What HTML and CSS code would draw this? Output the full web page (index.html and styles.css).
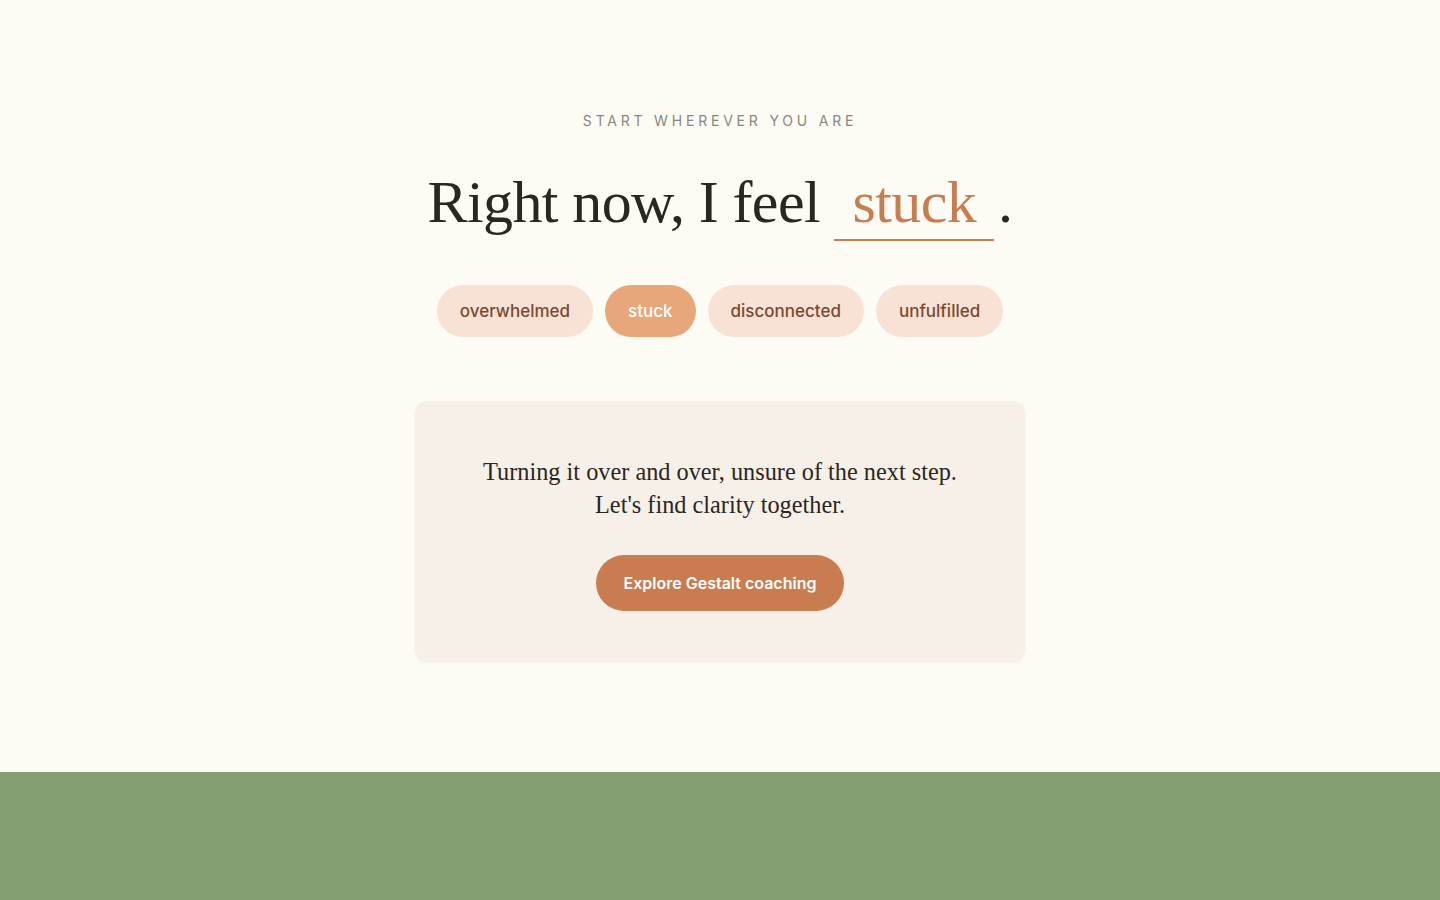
FILE: index.html
```html
<!DOCTYPE html>
<html lang="en">
<head>
<meta charset="utf-8">
<title>Start wherever you are</title>
<link rel="stylesheet" href="styles.css">
</head>
<body>
<main class="hero">
  <p class="eyebrow">Start wherever you are</p>
  <h1 class="headline">Right now, I feel <span class="feeling">stuck</span>.</h1>
  <div class="pills">
    <button class="pill">overwhelmed</button>
    <button class="pill pill-active">stuck</button>
    <button class="pill">disconnected</button>
    <button class="pill">unfulfilled</button>
  </div>
  <section class="card">
    <p class="card-text">Turning it over and over, unsure of the next step.<br>Let's find clarity together.</p>
    <a class="cta" href="#">Explore Gestalt coaching</a>
  </section>
</main>
<footer class="footer"></footer>
</body>
</html>
```

FILE: styles.css
```css
* { box-sizing: border-box; }
html, body { margin: 0; padding: 0; }
body {
  background: #fdfcf4;
  font-family: "Liberation Serif", "Times New Roman", serif;
  color: #2a2622;
}
.hero {
  display: flex;
  flex-direction: column;
  align-items: center;
  padding: 111px 0 110px;
}
.eyebrow {
  margin: 0;
  font-family: Inter, "Liberation Sans", sans-serif;
  font-size: 14px;
  line-height: 20px;
  letter-spacing: 3.8px;
  text-transform: uppercase;
  color: #8b857e;
  font-weight: 400;
}
.headline {
  margin: 35px 0 0;
  font-family: "Liberation Serif", "Times New Roman", serif;
  font-weight: 400;
  font-size: 60px;
  line-height: 72px;
  letter-spacing: -0.6px;
  color: #2a2622;
  text-align: center;
}
.feeling {
  display: inline-block;
  line-height: 1;
  margin-right: 4px;
  padding: 0 18px 7px;
  border-bottom: 2px solid #c87d50;
  color: #c87d50;
}
.pills {
  display: flex;
  gap: 12px;
  margin-top: 44px;
}
.pill {
  border: none;
  border-radius: 999px;
  background: #f8e1d5;
  color: #7b4a2e;
  font-family: Inter, "Liberation Sans", sans-serif;
  font-size: 17px;
  font-weight: 500;
  height: 52px;
  padding: 0 23px;
  cursor: pointer;
}
.pill-active {
  background: #e7a77b;
  color: #ffffff;
}
.card {
  margin-top: 64px;
  width: 610px;
  background: #f7f0e8;
  border-radius: 12px;
  box-shadow: 0 1px 3px rgba(60, 40, 20, 0.06);
  padding: 54px 30px 51px;
  display: flex;
  flex-direction: column;
  align-items: center;
}
.card-text {
  margin: 0;
  font-size: 24.3px;
  line-height: 33px;
  text-align: center;
  color: #2a2622;
}
.cta {
  margin-top: 34px;
  display: inline-block;
  background: #c87c50;
  color: #ffffff;
  text-decoration: none;
  font-family: Inter, "Liberation Sans", sans-serif;
  font-size: 16px;
  font-weight: 600;
  line-height: 20px;
  padding: 18px 28px;
  border-radius: 999px;
}
.footer {
  height: 128px;
  background: #859e71;
}
```
